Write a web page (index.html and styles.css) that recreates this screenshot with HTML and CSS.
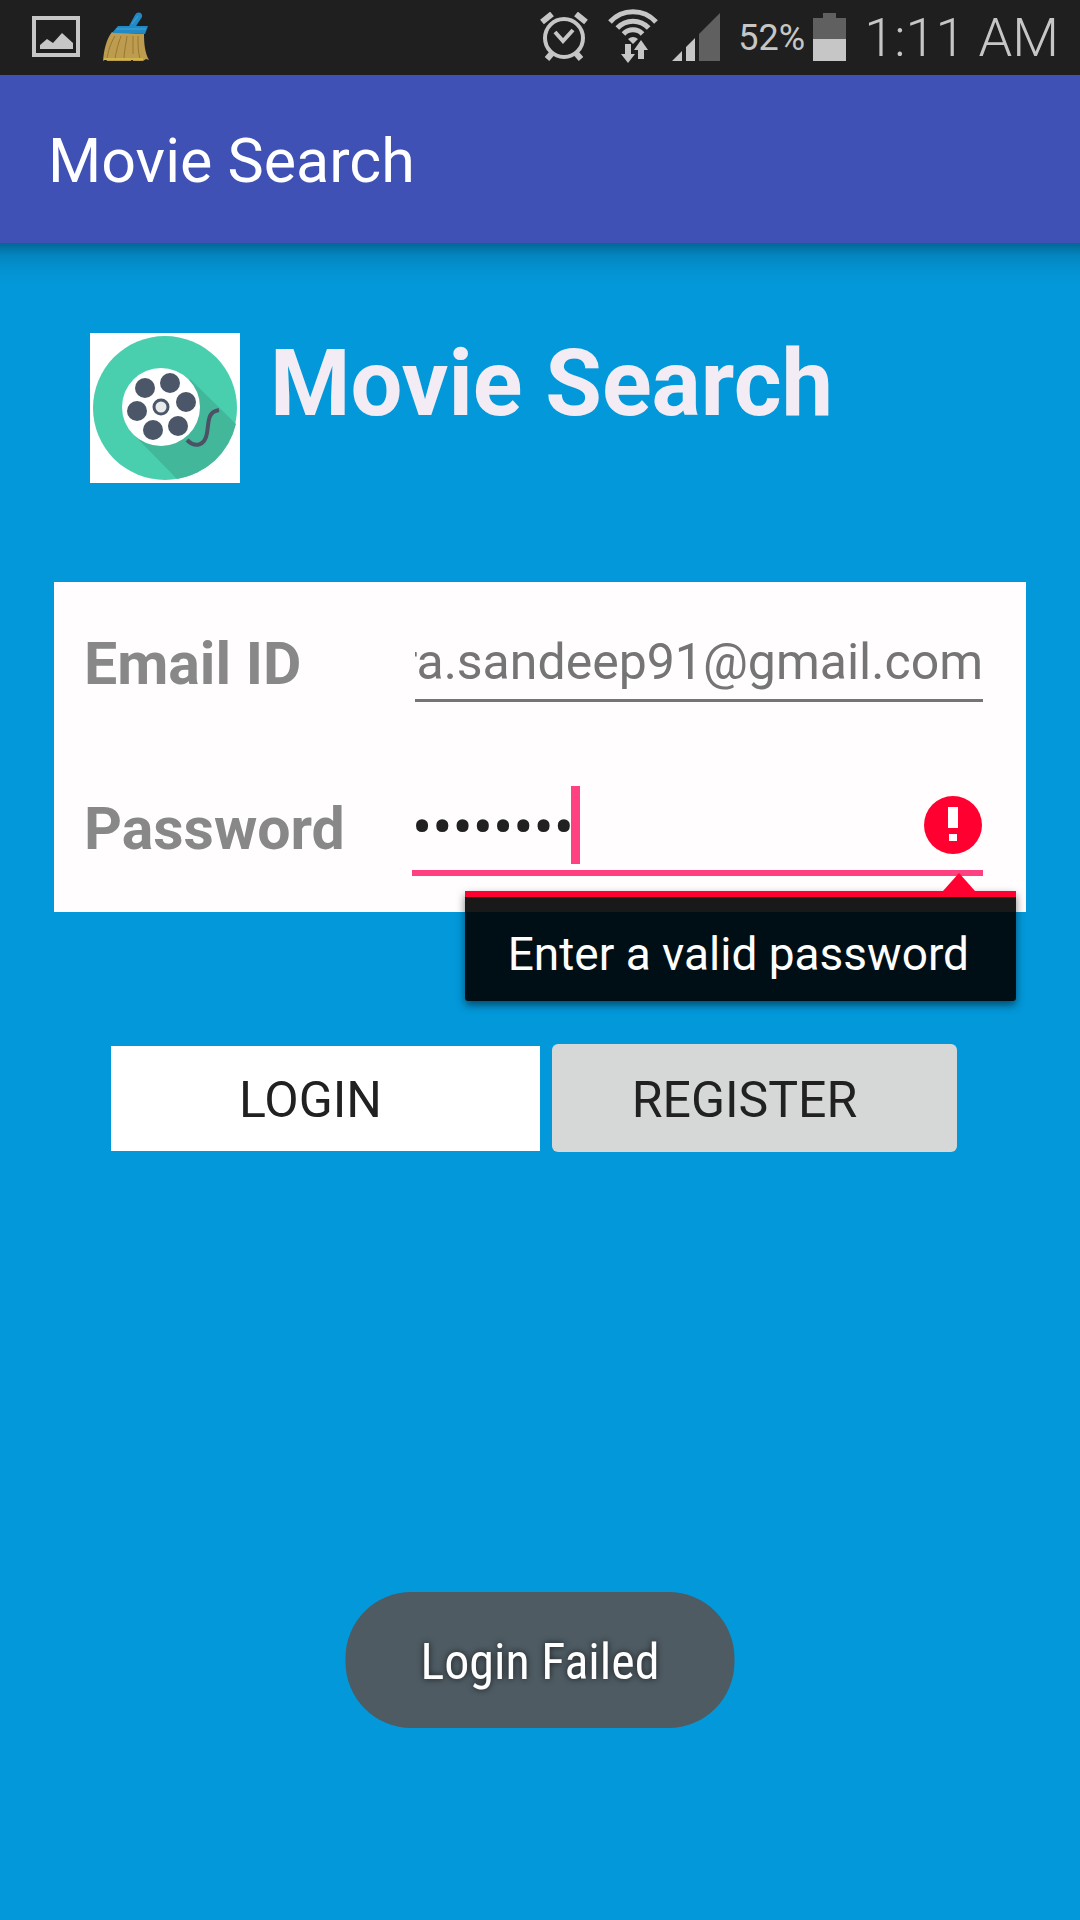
FILE: index.html
```html
<!DOCTYPE html>
<html lang="en">
<head>
<meta charset="utf-8">
<meta name="viewport" content="width=device-width, initial-scale=1">
<title>Movie Search</title>
<link rel="stylesheet" href="styles.css">
</head>
<body>
<div class="status-bar">
  <div class="notifications">
    <svg class="icon-picture" width="48" height="41" viewBox="0 0 48 41" aria-hidden="true">
      <rect x="2" y="2" width="44" height="37" fill="none" stroke="#c6c6c6" stroke-width="4"/>
      <path d="M8 33v-4l7-6 6 4 9-10 11 10v6z" fill="#c6c6c6"/>
    </svg>
    <svg class="icon-broom" width="48" height="50" viewBox="0 0 48 50" aria-hidden="true">
      <path d="M10 20C4 28 2 38 1 49l3-2 1 2h24l1-3 1 3h10l3-2 3 1c-4-7-5-16-5-26z" fill="#bd9c50"/>
      <path d="M13 24C8 32 6 40 5 47M19 24c-3 8-5 16-6 23M25 24c-1 8-3 16-3 23M31 24v18M36 24c0 8 0 16 2 23" fill="none" stroke="#987832" stroke-width="1"/>
      <path d="M2 47h39" stroke="#cdb645" stroke-width="2"/>
      <path d="M10 21l6-7h11l6-11c2-4 8-3 7 2l-6 9h12l-3 8z" fill="#2189c4"/>
      <path d="M14 17h30M30 12l6-8" stroke="#3fa5d8" stroke-width="1"/>
    </svg>
  </div>
  <div class="indicators">
    <svg class="icon-alarm" width="49" height="50" viewBox="0 0 49 50" fill="none" stroke="#c6c6c6" aria-hidden="true">
      <circle cx="24" cy="26" r="19" stroke-width="4"/>
      <path d="M15 20l8 9 10-11" stroke-width="4"/>
      <path d="M2 10l10-8M46 10L36 2" stroke-width="6"/>
      <path d="M7 47l6-7M41 47l-6-7" stroke-width="6"/>
    </svg>
    <svg class="icon-wifi" width="52" height="56" viewBox="0 0 52 56" aria-hidden="true">
      <g fill="none" stroke="#c6c6c6" stroke-width="5">
        <path d="M3 13A31 31 0 0 1 49 13"/>
        <path d="M10.300 19A21.500 21.500 0 0 1 41.700 19"/>
        <path d="M16.500 25A13 13 0 0 1 35.500 25"/>
      </g>
      <path d="M21 30q5-4 10 0l-5 5z" fill="#c6c6c6"/>
      <path d="M18 35h6v10h4l-7 9-7-9h4zM31 50h6v-9h4l-7-10-7 10h4z" fill="#c6c6c6"/>
    </svg>
    <svg class="icon-signal" width="48" height="48" viewBox="0 0 48 48" aria-hidden="true">
      <path d="M0 48l10-10v10zM14 48V34l9-9v23z" fill="#c6c6c6"/>
      <path d="M27 48V21L48 0v48z" fill="#606060"/>
    </svg>
    <span class="percent">52%</span>
    <svg class="icon-battery" width="33" height="48" viewBox="0 0 33 48" aria-hidden="true">
      <path d="M10 0h13v5h10v21H0V5h10z" fill="#606060"/>
      <path d="M0 26h33v22H0z" fill="#c6c6c6"/>
    </svg>
    <time class="clock">1:11 AM</time>
  </div>
</div>

<header class="app-bar"><span class="app-title">Movie Search</span></header>

<main class="content">
  <div class="brand">
    <svg class="logo" width="150" height="150" viewBox="0 0 150 150" aria-hidden="true">
      <rect width="150" height="150" fill="#fff"/>
      <circle cx="75" cy="75" r="72" fill="#49cfae"/>
      <path d="M100 46L146 91A72 72 0 0 1 87 146L46 104z" fill="#42b79a"/>
      <circle cx="71" cy="74" r="39" fill="#fff"/>
      <g fill="#4b5768">
        <circle cx="55" cy="55" r="10"/><circle cx="80" cy="50" r="10"/>
        <circle cx="96" cy="69" r="10"/><circle cx="88" cy="93" r="10"/>
        <circle cx="63" cy="97" r="10"/><circle cx="47" cy="78" r="10"/>
      </g>
      <circle cx="71" cy="74" r="7" fill="#e8eaec" stroke="#4b5768" stroke-width="3"/>
      <path d="M97 107c8 8 18 6 20-7 2-11 0-21 12-23" fill="none" stroke="#4c5165" stroke-width="4"/>
    </svg>
    <h1 class="brand-name">Movie Search</h1>
  </div>

  <form class="login">
    <div class="card">
      <div class="row row-email">
        <label class="label" for="email">Email ID</label>
        <input class="input" id="email" type="text" value="ra.sandeep91@gmail.com">
      </div>
      <div class="row row-password">
        <label class="label" for="password">Password</label>
        <div class="field">
          <input class="input" id="password" type="password" value="password" aria-describedby="password-error">
          <span class="caret"></span>
          <svg class="error-icon" width="58" height="58" viewBox="0 0 58 58" aria-hidden="true">
            <circle cx="29" cy="29" r="29" fill="#ff0030"/>
            <path d="M24 11h10v21H24zM25 38h8v7h-8z" fill="#fff"/>
          </svg>
          <div class="tooltip" id="password-error" role="alert">Enter a valid password</div>
        </div>
      </div>
    </div>
    <div class="actions">
      <button class="button button-login" type="button">LOGIN</button>
      <button class="button button-register" type="button">REGISTER</button>
    </div>
  </form>
</main>

<div class="toast" role="status">Login Failed</div>
</body>
</html>
```
FILE: styles.css
```css
* {
  box-sizing: border-box;
}

body {
  margin: 0;
  min-height: 100vh;
  background: #0398da;
  color: #212121;
  font-family: Roboto, "Liberation Sans", sans-serif;
  font-size: 50px;
}

svg {
  display: block;
  flex: none;
}

.status-bar {
  display: flex;
  justify-content: space-between;
  height: 75px;
  padding: 0 21px 0 32px;
  background: #1f1f1f;
  color: #c6c6c6;
}

.notifications,
.indicators {
  display: flex;
  align-items: center;
}

.notifications {
  gap: 22px;
}

.indicators {
  gap: 18px;
}

.icon-picture,
.icon-broom,
.icon-alarm,
.icon-wifi,
.icon-signal,
.icon-battery {
  margin-bottom: 2px;
}

.icon-signal {
  margin-left: -5px;
}

.percent {
  font-size: 36px;
}

.icon-battery {
  margin-left: -10px;
}

.clock {
  font-size: 54px;
  font-weight: 300;
  line-height: 70px;
}

.app-bar {
  position: relative;
  display: flex;
  align-items: center;
  height: 168px;
  padding: 4px 48px 0;
  background: #3f51b5;
  color: #fff;
}

.app-bar::after {
  content: "";
  position: absolute;
  top: 100%;
  left: 0;
  right: 0;
  height: 42px;
  background: linear-gradient(rgba(0, 0, 0, 0.32), rgba(0, 0, 0, 0.12) 30%, rgba(0, 0, 0, 0.04) 65%, transparent);
}

.app-title {
  font-size: 61px;
  line-height: 72px;
}

.content {
  padding: 90px 54px;
}

.brand {
  display: flex;
  gap: 30px;
  padding-left: 36px;
}

.brand-name {
  margin: 0;
  color: #f4ecf4;
  font-size: 92px;
  line-height: 102px;
}

.card {
  margin-top: 99px;
  padding: 36px 43px 36px 30px;
  background: #fffdfe;
}

.row {
  display: flex;
  align-items: flex-start;
}

.label {
  flex: none;
  height: 90px;
  color: #888;
  font-size: 59px;
  font-weight: 700;
  line-height: 92px;
}

.row-email .label {
  width: 331px;
}

.row-password {
  margin-top: 75px;
}

.row-password .label {
  width: 328px;
}

.input {
  display: block;
  flex: 1;
  width: 100%;
  min-width: 0;
  height: 84px;
  margin: 0;
  padding: 6px 0 0;
  border: 0;
  border-radius: 0;
  outline: 0;
  background: transparent;
  color: inherit;
  font: inherit;
}

/* Keeps the end of a long address in view */
.row-email .input {
  direction: rtl;
  border-bottom: 3px solid #757575;
  color: #757575;
}

.field {
  position: relative;
  flex: 1;
}

.field .input {
  height: 93px;
  padding: 2px 0 0;
  border-bottom: 6px solid #ff4081;
  font-size: 60px;
}

.caret {
  position: absolute;
  top: 3px;
  left: 159px;
  width: 9px;
  height: 78px;
  background: #ff4081;
}

.error-icon {
  position: absolute;
  top: 13px;
  right: 1px;
}

.tooltip {
  position: absolute;
  top: 108px;
  right: -33px;
  padding: 32px 47px 22px 43px;
  border-top: 6px solid #ff0030;
  border-radius: 0 0 3px 3px;
  background: rgba(0, 0, 0, 0.9);
  background-clip: padding-box;
  box-shadow: 0 4px 8px rgba(0, 0, 0, 0.5);
  color: #fff;
  font-size: 46px;
  line-height: 50px;
  white-space: nowrap;
}

.tooltip::before {
  content: "";
  position: absolute;
  top: -24px;
  right: 41px;
  border: solid transparent;
  border-width: 0 16px 18px;
  border-bottom-color: #ff0030;
}

.actions {
  display: grid;
  grid-template-columns: 429fr 405fr;
  align-items: center;
  gap: 12px;
  margin-top: 132px;
  padding: 0 69px 0 57px;
}

.button {
  border: 0;
  color: #212121;
  font: inherit;
}

.button-login {
  height: 105px;
  padding: 4px 30px 0 0;
  background: #fff;
}

.button-register {
  height: 108px;
  padding: 4px 20px 0 0;
  border-radius: 6px;
  background: #d6d8d7;
}

.toast {
  position: fixed;
  bottom: 192px;
  left: 50%;
  padding: 40px 75px 36px;
  border-radius: 66px;
  background: #4e5b62;
  color: #fff;
  font-family: "Roboto Condensed", Roboto, "Liberation Sans", sans-serif;
  font-size: 50px;
  line-height: 60px;
  text-shadow: 0 0 6px rgba(0, 0, 0, 0.7);
  white-space: nowrap;
  transform: translateX(-50%);
}
```
